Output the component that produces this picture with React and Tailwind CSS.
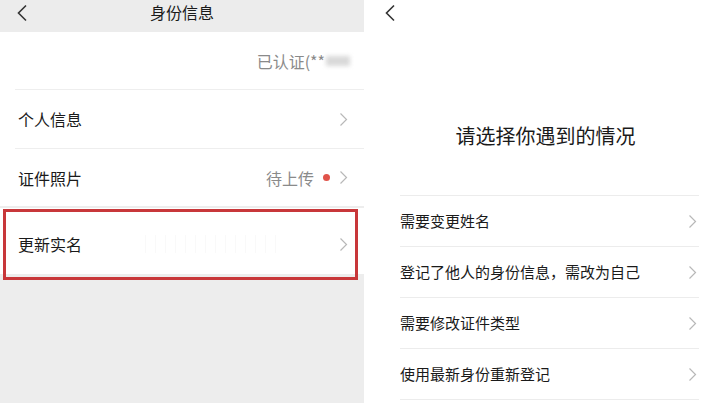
import React from "react";

const font = { fontFamily: '"Noto Sans CJK SC", "Noto Sans", sans-serif' };

function Chevron({ className = "" }) {
  return (
    <svg width="9" height="15" viewBox="0 0 9 15" className={className}>
      <path d="M1.5 1.5 L7.5 7.5 L1.5 13.5" fill="none" stroke="#b8b8b8" strokeWidth="1.2" />
    </svg>
  );
}

function BackArrow() {
  return (
    <svg width="12" height="18" viewBox="0 0 12 18">
      <path d="M10 1.5 L2.5 9 L10 16.5" fill="none" stroke="#333" strokeWidth="1.6" />
    </svg>
  );
}

const options = [
  "需要变更姓名",
  "登记了他人的身份信息，需改为自己",
  "需要修改证件类型",
  "使用最新身份重新登记",
];

export default function App() {
  return (
    <div className="flex w-[719px] h-[403px] overflow-hidden bg-white" style={font}>
      {/* left: 身份信息 */}
      <div className="w-[364px] h-full bg-[#ededed] flex flex-col">
        <div className="h-[32px] bg-[#ececec] relative">
          <div className="pl-[16px] pt-[4px]">
            <BackArrow />
          </div>
          <div className="absolute left-0 right-0 top-[4px] text-center text-[16px] text-[#1a1a1a] leading-[16px]">身份信息</div>
        </div>

        <div className="bg-white">
          <div className="h-[58px] flex items-center justify-end pr-[14px] border-b border-[#eeeeee] ml-[15px]">
            <span className="text-[16px] text-[#8a8a8a]">已认证(**</span>
            <span className="w-[24px] h-[10px] bg-[#d9d9d9] blur-[2px] ml-[1px]" />
          </div>
          <div className="h-[58px] flex items-center justify-between pl-[18px] pr-[16px]">
            <span className="text-[16px] text-[#1a1a1a]">个人信息</span>
            <Chevron />
          </div>
          <div className="border-b border-[#eeeeee] ml-[15px]" />
          <div className="h-[57px] flex items-center justify-between pl-[18px] pr-[16px]">
            <span className="text-[16px] text-[#1a1a1a]">证件照片</span>
            <div className="flex items-center">
              <span className="text-[16px] text-[#8a8a8a]">待上传</span>
              <span className="w-[7px] h-[7px] rounded-full bg-[#e0534a] ml-[9px] mr-[9px]" />
              <Chevron />
            </div>
          </div>
        </div>

        <div className="relative mt-[2px] bg-white h-[66px] flex items-center justify-between pl-[18px] pr-[16px]">
          <span className="text-[16px] text-[#1a1a1a] pt-[6px]">更新实名</span>
          <div className="flex-1 flex gap-[9px] justify-center pt-[6px] opacity-20">
            {Array.from({ length: 14 }).map((_, i) => (
              <span key={i} className="w-[1px] h-[18px] bg-[#e5e5e5]" />
            ))}
          </div>
          <div className="pt-[6px]">
            <Chevron />
          </div>
          <div className="absolute left-[3px] top-[1px] w-[355px] h-[71px] border-[3px] border-[#c8373a] pointer-events-none" />
        </div>
      </div>

      {/* right: 请选择你遇到的情况 */}
      <div className="flex-1 h-full bg-white ml-[2px] flex flex-col">
        <div className="h-[28px] pl-[18px] pt-[4px]">
          <BackArrow />
        </div>
        <div className="h-[167px] flex items-center justify-center pt-[48px] pl-[6px]">
          <span className="text-[20px] text-[#1a1a1a]">请选择你遇到的情况</span>
        </div>
        <div className="ml-[34px] mr-[20px] border-t border-[#ececec]">
          {options.map((t) => (
            <div key={t} className="h-[51px] flex items-center justify-between border-b border-[#ececec] pr-[2px]">
              <span className="text-[15px] text-[#1a1a1a]">{t}</span>
              <Chevron />
            </div>
          ))}
        </div>
      </div>
    </div>
  );
}
